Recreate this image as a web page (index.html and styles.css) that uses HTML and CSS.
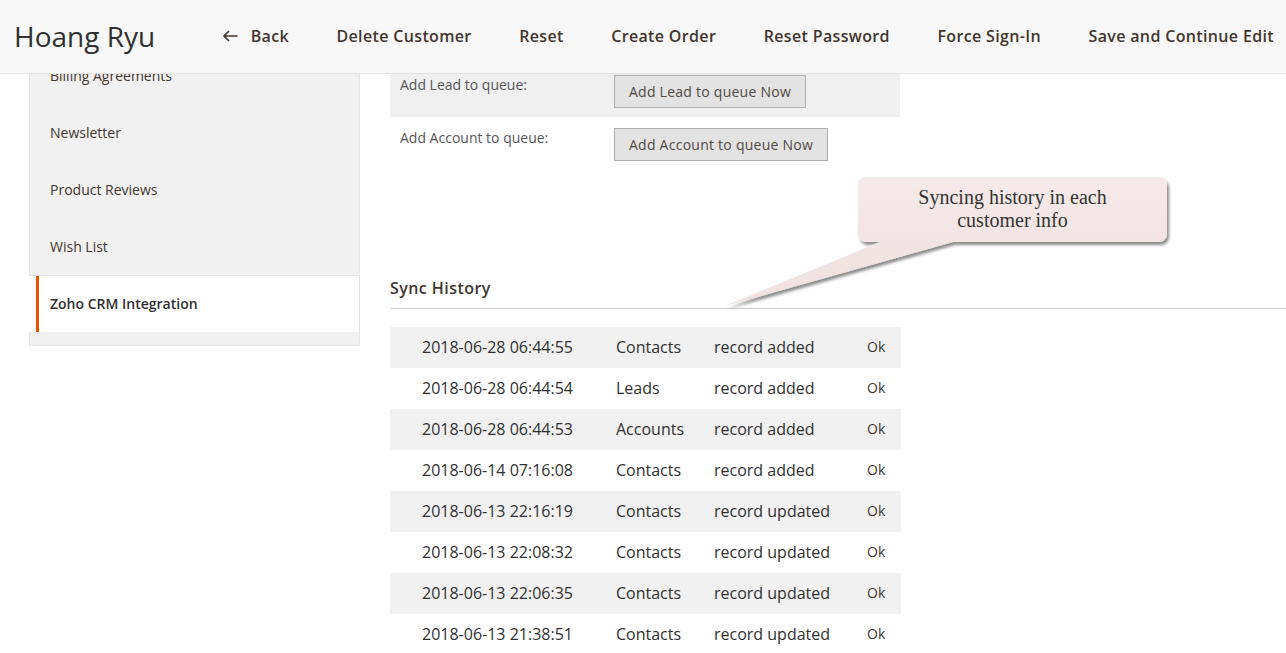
FILE: index.html
```html
<!DOCTYPE html>
<html>
<head>
<meta charset="utf-8">
<link rel="stylesheet" href="styles.css">
</head>
<body>
<header class="topbar">
  <h1 class="title">Hoang Ryu</h1>
  <nav class="actions">
    <span class="action back"><svg class="back-icon" width="16" height="12" viewBox="0 0 16 12"><path d="M15.5 6H2M7 1L2 6l5 5" fill="none" stroke="#41362f" stroke-width="1.7"/></svg>Back</span>
    <span class="action">Delete Customer</span>
    <span class="action">Reset</span>
    <span class="action">Create Order</span>
    <span class="action">Reset Password</span>
    <span class="action">Force Sign-In</span>
    <span class="action">Save and Continue Edit</span>
  </nav>
</header>
<div class="page">
  <aside class="sidebar">
    <div class="nav-item first">Billing Agreements</div>
    <div class="nav-item">Newsletter</div>
    <div class="nav-item">Product Reviews</div>
    <div class="nav-item">Wish List</div>
    <div class="nav-item active">Zoho CRM Integration</div>
  </aside>
  <main class="main">
    <div class="form-row shaded first">
      <div class="label">Add Lead to queue:</div>
      <button class="btn">Add Lead to queue Now</button>
    </div>
    <div class="form-row">
      <div class="label">Add Account to queue:</div>
      <button class="btn">Add Account to queue Now</button>
    </div>
    <h2 class="section-title">Sync History</h2>
    <table class="history">
      <tr><td class="c-date">2018-06-28 06:44:55</td><td class="c-mod">Contacts</td><td class="c-act">record added</td><td class="c-st">Ok</td></tr>
      <tr><td class="c-date">2018-06-28 06:44:54</td><td class="c-mod">Leads</td><td class="c-act">record added</td><td class="c-st">Ok</td></tr>
      <tr><td class="c-date">2018-06-28 06:44:53</td><td class="c-mod">Accounts</td><td class="c-act">record added</td><td class="c-st">Ok</td></tr>
      <tr><td class="c-date">2018-06-14 07:16:08</td><td class="c-mod">Contacts</td><td class="c-act">record added</td><td class="c-st">Ok</td></tr>
      <tr><td class="c-date">2018-06-13 22:16:19</td><td class="c-mod">Contacts</td><td class="c-act">record updated</td><td class="c-st">Ok</td></tr>
      <tr><td class="c-date">2018-06-13 22:08:32</td><td class="c-mod">Contacts</td><td class="c-act">record updated</td><td class="c-st">Ok</td></tr>
      <tr><td class="c-date">2018-06-13 22:06:35</td><td class="c-mod">Contacts</td><td class="c-act">record updated</td><td class="c-st">Ok</td></tr>
      <tr><td class="c-date">2018-06-13 21:38:51</td><td class="c-mod">Contacts</td><td class="c-act">record updated</td><td class="c-st">Ok</td></tr>
    </table>
  </main>
</div>
<div class="callout">
  <svg class="callout-shape" width="470" height="150" viewBox="0 0 470 150">
    <defs>
      <filter id="sh" x="-10%" y="-10%" width="130%" height="140%">
        <feDropShadow dx="2" dy="3" stdDeviation="1.8" flood-color="#000" flood-opacity="0.45"/>
      </filter>
      <linearGradient id="bg" x1="0" y1="0" x2="0" y2="1">
        <stop offset="0" stop-color="#f5e9e9"/>
        <stop offset="1" stop-color="#f1e0e0"/>
      </linearGradient>
    </defs>
    <path filter="url(#sh)" fill="url(#bg)" d="M146 7h293a8 8 0 0 1 8 8v49a8 8 0 0 1-8 8H233L5 136 160 72h-14a8 8 0 0 1-8-8V15a8 8 0 0 1 8-8z"/>
  </svg>
  <div class="callout-text">Syncing history in each<br>customer info</div>
</div>
</body>
</html>
```
FILE: styles.css
```css
* { box-sizing: border-box; }
html, body { margin: 0; padding: 0; }
body {
  width: 1286px;
  height: 653px;
  overflow: hidden;
  background: #fff;
  font-family: "Open Sans", "DejaVu Sans", sans-serif;
  color: #303030;
  position: relative;
}
.topbar {
  height: 74px;
  background: #f8f8f8;
  border-bottom: 1px solid #e3e3e3;
  display: flex;
  align-items: center;
  padding: 0 12px 0 14px;
  position: relative;
  z-index: 2;
}
.title {
  margin: 0;
  font-size: 28px;
  font-weight: 400;
  color: #303030;
  line-height: 1;
  padding-bottom: 1px;
}
.actions {
  margin-left: auto;
  display: flex;
  align-items: center;
  gap: 47.5px;
  padding-bottom: 2px;
}
.action {
  font-size: 16px;
  font-weight: 600;
  color: #41362f;
  display: flex;
  align-items: center;
  letter-spacing: 0.35px;
}
.back-icon { margin-right: 13px; }
.page {
  display: flex;
  height: 579px;
  overflow: hidden;
}
.sidebar {
  width: 331px;
  margin-left: 29px;
  flex: none;
  align-self: flex-start;
  background: #f1f1f1;
  border-left: 1px solid #e6e6e6;
  border-right: 1px solid #e6e6e6;
  border-bottom: 1px solid #e3e3e3;
  padding-bottom: 13px;
  margin-top: -27px;
}
.nav-item {
  height: 57px;
  display: flex;
  align-items: center;
  padding-left: 20px;
  font-size: 14px;
  color: #41362f;
}
.nav-item.active {
  font-weight: 600;
  color: #303030;
  background: linear-gradient(to right, #fff 0 7px, #eb5202 7px 10px, #fff 10px);
  margin-left: -1px;
  padding-left: 21px;
  border-top: 1px solid #e6e6e6;
  padding-bottom: 1px;
}
.main {
  flex: 1;
  margin-left: 30px;
  margin-top: -10px;
}
.form-row {
  width: 510px;
  display: flex;
  align-items: flex-start;
  padding: 11px 0 9px 10px;
}
.form-row.shaded { background: #f0f0f0; }
.label {
  width: 214px;
  font-size: 14px;
  color: #575757;
  line-height: 20px;
}
.btn {
  font-family: "Open Sans", "DejaVu Sans", sans-serif;
  font-size: 14px;
  font-weight: 500;
  letter-spacing: 0.25px;
  color: #514943;
  background: #e3e3e3;
  border: 1px solid #adadad;
  height: 33px;
  padding: 0 14px;
  margin: 0;
  border-radius: 0;
}
.section-title {
  margin: 107px 0 0 0;
  font-size: 16px;
  font-weight: 600;
  letter-spacing: 0.45px;
  color: #41362f;
  line-height: 22px;
  padding-bottom: 9px;
  border-bottom: 1px solid #cccccc;
}
.history {
  margin-top: 18px;
  width: 511px;
  border-collapse: collapse;
  font-size: 16px;
  color: #303030;
}
.history tr { height: 41px; }
.history tr:nth-child(odd) { background: #f1f1f1; }
.history td { padding: 0 0 2px 0; vertical-align: middle; }
.c-date { width: 226px; padding-left: 32px !important; }
.c-mod { width: 98px; }
.c-act { width: 153px; }
.c-st { font-size: 14px; color: #41362f; }
.callout {
  position: absolute;
  left: 720px;
  top: 170px;
  width: 470px;
  height: 150px;
  z-index: 3;
}
.callout-shape { position: absolute; left: 0; top: 0; }
.callout-text {
  position: absolute;
  left: 138px;
  top: 16px;
  width: 309px;
  text-align: center;
  font-family: "Liberation Serif", "Times New Roman", serif;
  font-size: 20px;
  line-height: 23px;
  color: #333;
}
```
